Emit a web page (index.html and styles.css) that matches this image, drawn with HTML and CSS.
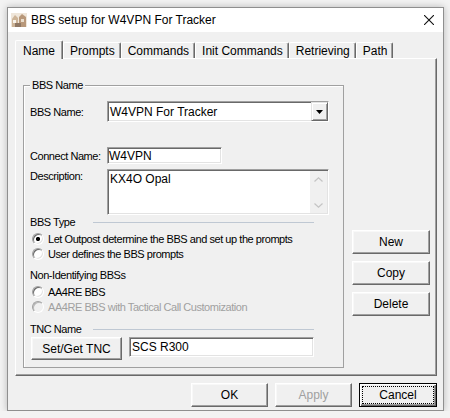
FILE: index.html
```html
<!DOCTYPE html>
<html lang="en">
<head>
    <meta charset="UTF-8">
    <title>BBS setup for W4VPN For Tracker</title>
    <link rel="stylesheet" href="styles.css">
</head>
<body>
    <div class="window">
        <!-- Barra de titulo -->
        <div class="titlebar">
            <svg class="app-icon" viewBox="0 0 16 16">
                <rect x="0" y="1" width="16" height="14" fill="#efe6da"/>
                <path d="M1 15 L1 7 L4 3 L7 6 L7 15 Z" fill="#cdb497"/>
                <path d="M8 15 L8 5 L11 2 L15 5 L15 15 Z" fill="#b8987a"/>
                <rect x="2" y="8" width="3" height="3" fill="#f7f2ea"/>
                <rect x="10" y="7" width="3" height="3" fill="#e9ddcc"/>
                <rect x="4" y="11" width="6" height="4" fill="#8f7763"/>
            </svg>
            <span class="title">BBS setup for W4VPN For Tracker</span>
            <svg class="close" viewBox="0 0 10 10">
                <path d="M0 0 L10 10 M10 0 L0 10" stroke="#111" stroke-width="1.1" fill="none"/>
            </svg>
        </div>

        <div class="client">
            <div class="tabs">
                <div class="tab active">Name</div>
                <div class="tab">Prompts</div>
                <div class="tab">Commands</div>
                <div class="tab">Init Commands</div>
                <div class="tab">Retrieving</div>
                <div class="tab">Path</div>
            </div>

            <div class="panel">
                <div class="group">
                    <span class="legend">BBS Name</span>

                    <div class="row row-bbs">
                        <span class="lbl">BBS Name:</span>
                        <div class="combo">
                            <span class="combo-text">W4VPN For Tracker</span>
                            <span class="combo-btn">
                                <svg width="7" height="4" viewBox="0 0 7 4"><path d="M0 0 H7 L3.5 4 Z" fill="#000"/></svg>
                            </span>
                        </div>
                    </div>

                    <div class="row row-connect">
                        <span class="lbl">Connect Name:</span>
                        <div class="field field-connect">W4VPN</div>
                    </div>

                    <div class="row row-desc">
                        <span class="lbl lbl-top">Description:</span>
                        <div class="memo">
                            <span class="memo-text">KX4O Opal</span>
                            <div class="vscroll">
                                <svg width="9" height="5" viewBox="0 0 9 5"><path d="M0.5 4.5 L4.5 0.8 L8.5 4.5" stroke="#c4c4c4" stroke-width="1.2" fill="none"/></svg>
                                <svg width="9" height="5" viewBox="0 0 9 5"><path d="M0.5 0.5 L4.5 4.2 L8.5 0.5" stroke="#c4c4c4" stroke-width="1.2" fill="none"/></svg>
                            </div>
                        </div>
                    </div>

                    <div class="section section-type"><span>BBS Type</span><span class="rule"></span></div>
                    <div class="radio-row first"><span class="radio checked"></span>Let Outpost determine the BBS and set up the prompts</div>
                    <div class="radio-row"><span class="radio"></span>User defines the BBS prompts</div>

                    <div class="section section-plain">Non-Identifying BBSs</div>
                    <div class="radio-row first"><span class="radio"></span>AA4RE BBS</div>
                    <div class="radio-row disabled"><span class="radio"></span>AA4RE BBS with Tactical Call Customization</div>

                    <div class="section section-tnc"><span>TNC Name</span><span class="rule"></span></div>
                    <div class="tnc-row">
                        <button class="btn btn-tnc">Set/Get TNC</button>
                        <div class="field field-tnc">SCS R300</div>
                    </div>
                </div>

                <div class="side-buttons">
                    <button class="btn btn-side">New</button>
                    <button class="btn btn-side">Copy</button>
                    <button class="btn btn-side">Delete</button>
                </div>
            </div>

            <!-- Botones inferiores -->
            <div class="footer">
                <button class="btn btn-foot">OK</button>
                <button class="btn btn-foot" disabled>Apply</button>
                <button class="btn btn-foot btn-default">Cancel</button>
            </div>
        </div>
    </div>
</body>
</html>
```

FILE: styles.css
```css
body {
    margin: 0;
    background: #f3f3f3;
    font-family: "Liberation Sans", Arial, sans-serif;
    color: #000;
}

.window {
    box-sizing: border-box;
    width: 437px;
    height: 404px;
    margin: 7px 0 0 7px;
    border: 1px solid #8f8f8f;
    background: #f0f0f0;
    box-shadow: 0 0 7px rgba(0, 0, 0, 0.25);
    display: flex;
    flex-direction: column;
}

/* Barra de titulo */
.titlebar {
    height: 24px;
    flex-shrink: 0;
    background: #fff;
    display: flex;
    align-items: center;
}

.app-icon {
    width: 16px;
    height: 16px;
    margin-left: 3px;
}

.title {
    margin-left: 4px;
    font-size: 12px;
}

.close {
    width: 10px;
    height: 10px;
    margin-left: auto;
    margin-right: 9px;
}

.client {
    padding: 0 6px 0 7px;
}

/* Pestanas */
.tabs {
    display: flex;
    align-items: flex-end;
    height: 18px;
    margin-top: 8px;
}

.tab {
    box-sizing: border-box;
    height: 16px;
    padding: 1px 5px 0 6px;
    font-size: 12px;
    line-height: 14px;
    border-top: 1px solid #fff;
    border-left: 1px solid #fff;
    border-right: 1px solid #696969;
    box-shadow: inset -1px 0 #a0a0a0;
    border-radius: 2px 2px 0 0;
}

.tab.active {
    height: 19px;
    margin-bottom: -1px;
    padding: 3px 7px 0 7px;
    position: relative;
    z-index: 1;
    background: #f0f0f0;
}

.panel {
    box-sizing: border-box;
    height: 318px;
    display: flex;
    padding: 26px 0 0 7px;
    border: 1px solid;
    border-color: #fff #696969 #696969 #fff;
    box-shadow: inset -1px -1px #a0a0a0;
}

/* Grupo BBS Name */
.group {
    box-sizing: border-box;
    width: 321px;
    height: 283px;
    padding-left: 6px;
    position: relative;
    border: 1px solid #a0a0a0;
    box-shadow: inset 1px 1px #fff;
    font-size: 11px;
    letter-spacing: -0.45px;
}

.legend {
    position: absolute;
    top: -7px;
    left: 6px;
    padding: 0 2px;
    line-height: 13px;
    background: #f0f0f0;
}

.row {
    display: flex;
    align-items: center;
}

.row-bbs {
    margin-top: 15px;
    height: 21px;
}

.row-connect {
    margin-top: 25px;
    height: 17px;
}

.row-desc {
    margin-top: 5px;
    align-items: flex-start;
}

.lbl {
    width: 77px;
    flex-shrink: 0;
}

.lbl-top {
    padding-top: 1px;
}

/* Campos hundidos */
.combo,
.field,
.memo {
    box-sizing: border-box;
    background: #fff;
    border: 1px solid;
    border-color: #a0a0a0 #fff #fff #a0a0a0;
    box-shadow: inset 1px 1px #696969, inset -1px -1px #e3e3e3;
    font-size: 12px;
    letter-spacing: 0;
}

.combo {
    width: 222px;
    height: 21px;
    display: flex;
    align-items: center;
    padding: 1px 0 1px 2px;
}

.combo-text {
    flex: 1;
}

.combo-btn {
    box-sizing: border-box;
    width: 17px;
    height: 19px;
    display: flex;
    align-items: center;
    justify-content: center;
    background: #f0f0f0;
    border: 1px solid;
    border-color: #e3e3e3 #696969 #696969 #e3e3e3;
    box-shadow: inset 1px 1px #fff, inset -1px -1px #a0a0a0;
}

.field {
    display: flex;
    align-items: center;
    padding-left: 1px;
}

.field-connect {
    width: 115px;
    height: 17px;
}

.memo {
    width: 222px;
    height: 46px;
    display: flex;
    padding: 1px 1px 1px 2px;
}

.memo-text {
    flex: 1;
    padding-top: 1px;
    line-height: 14px;
}

.vscroll {
    width: 17px;
    display: flex;
    flex-direction: column;
    justify-content: space-between;
    align-items: center;
    padding: 6px 0 5px;
    background: #f0f0f0;
}

/* Secciones y radios */
.section {
    height: 14px;
    line-height: 14px;
}

.section-type,
.section-tnc {
    display: grid;
    grid-template-columns: 63px 1fr;
    align-items: center;
    margin-right: 29px;
}

.section-plain {
    margin-top: 7px;
}

.section-tnc {
    margin-top: 8px;
}

.rule {
    height: 1px;
    background: #bfc8d3;
}

.radio-row {
    height: 15px;
    display: flex;
    align-items: center;
    padding-left: 2px;
}

.radio-row.first {
    margin-top: 2px;
}

.radio-row.disabled {
    color: #a0a0a0;
}

.radio {
    box-sizing: border-box;
    width: 12px;
    height: 12px;
    margin-right: 4px;
    border-radius: 50%;
    border: 1px solid;
    border-color: #a0a0a0 #fff #fff #a0a0a0;
    background: #fff;
    box-shadow: inset 1px 1px #696969, inset -1px -1px #e3e3e3;
}

.radio.checked {
    background: radial-gradient(circle, #000 0 1.8px, #fff 2.4px);
}

.disabled .radio {
    background: #f0f0f0;
    box-shadow: inset 1px 1px #b8b8b8;
}

.tnc-row {
    display: flex;
    align-items: flex-start;
    margin-top: 1px;
}

/* Botones */
.btn {
    box-sizing: border-box;
    padding: 0;
    background: #f0f0f0;
    border: 1px solid;
    border-color: #fff #696969 #696969 #fff;
    box-shadow: inset -1px -1px #a0a0a0, inset 1px 1px #f8f8f8;
    font-family: "Liberation Sans", Arial, sans-serif;
    font-size: 12px;
    color: #000;
}

.btn:disabled {
    color: #a0a0a0;
}

.btn-tnc {
    width: 91px;
    height: 23px;
    margin-left: 1px;
}

.field-tnc {
    width: 185px;
    height: 20px;
    margin-left: 7px;
    padding-left: 2px;
}

.side-buttons {
    display: flex;
    flex-direction: column;
    gap: 7px;
    margin-left: 8px;
    padding-top: 145px;
}

.btn-side {
    width: 78px;
    height: 24px;
}

.footer {
    display: flex;
    justify-content: flex-end;
    gap: 7px;
    margin-top: 7px;
}

.btn-foot {
    width: 77px;
    height: 24px;
}

.btn-default {
    width: 78px;
    border: 1px solid #000;
    box-shadow: inset 1px 1px #fff, inset -1px -1px #696969, inset -2px -2px #a0a0a0;
    outline: 1px dotted #000;
    outline-offset: -4px;
}
```
